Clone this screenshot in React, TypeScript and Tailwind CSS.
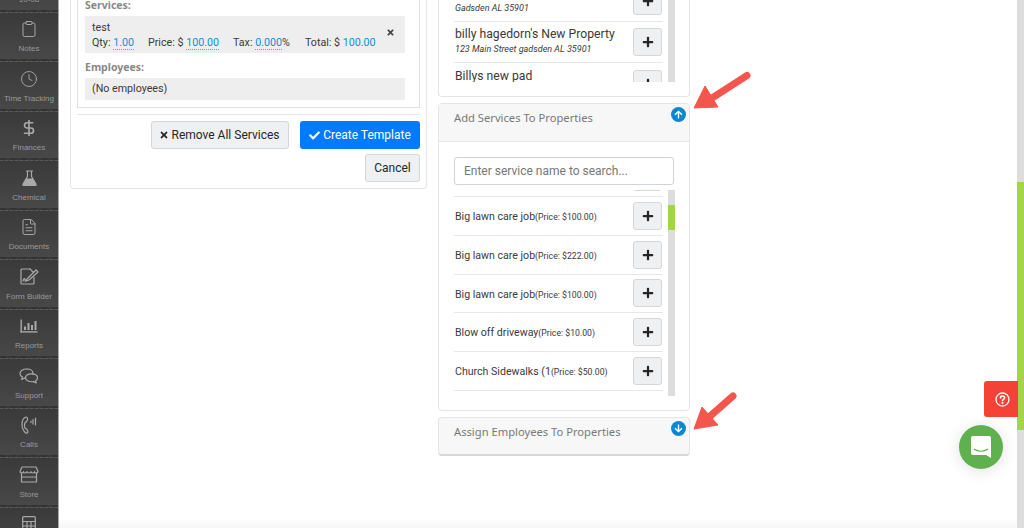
import React from "react";
import { Clipboard, Clock, DollarSign, FileText } from "lucide-react";
import { FaTimes, FaCheck, FaPlus, FaArrowUp, FaArrowDown } from "react-icons/fa";

const C = "#a9a9a9";
const stroke = { fill: "none", stroke: C, strokeWidth: 1.2, strokeLinecap: "round" as const, strokeLinejoin: "round" as const };

function FormIcon() {
  return (
    <svg width="20" height="18" viewBox="0 0 20 18" {...stroke}>
      <path d="M11 1H3a1 1 0 0 0-1 1v13a1 1 0 0 0 1 1h11a1 1 0 0 0 1-1V9" />
      <path d="M11 1l3 3" />
      <path d="M8 11l9-9 2 2-9 8-3 1z" />
      <path d="M4 13c1-3 2-3 2-1s1 1 2 0" />
    </svg>
  );
}
function ReportIcon() {
  return (
    <svg width="18" height="14" viewBox="0 0 18 14" fill={C}>
      <rect x="0.5" y="0.5" width="1.4" height="13" />
      <rect x="0.5" y="12.2" width="17" height="1.4" />
      <rect x="4" y="7.5" width="2" height="3.5" />
      <rect x="7.5" y="4" width="2" height="7" />
      <rect x="11" y="6" width="2" height="5" />
      <rect x="14.5" y="2" width="2" height="9" />
    </svg>
  );
}
function SupportIcon() {
  return (
    <svg width="20" height="16" viewBox="0 0 20 16" {...stroke}>
      <path d="M8 1C4 1 1 3 1 5.500c0 1.600 1 2.800 2.500 3.600L2.500 11.500l3.500-1.600" />
      <path d="M8 1c3.500 0 6 1.800 6 4.200 0 .3 0 .5-.1.800" />
      <path d="M12 5.800c3.800 0 6.500 1.600 6.500 4 0 1.300-.8 2.500-2 3.200l.8 2-3-1.400c-3.800.6-7.800-1-7.800-3.800 0-2.400 2.400-4 5.500-4z" />
    </svg>
  );
}
function CallIcon() {
  return (
    <svg width="16" height="18" viewBox="0 0 16 18" {...stroke}>
      <path d="M5 1C2 2 1 5 1 8.500s1.500 6.500 3.500 8.500c1.200.4 2.300-.3 2.500-1.300L5.500 12.800c-.8 0-1.500-.4-1.700-1.200-.5-1.800-.5-3.400.2-5 .4-.5.900-.7 1.500-.6L6.600 3C6.600 1.800 5.800 1 5 1z" />
      <path d="M10 5v1.500M12 3.500v4.500M14.500 2v7" />
    </svg>
  );
}
function StoreIcon() {
  return (
    <svg width="20" height="17" viewBox="0 0 20 17" {...stroke}>
      <path d="M3 1h14l2 4.500c0 1-1 1.500-1.800 1.500S15.500 6.500 15.500 5.500c0 1-1 1.500-1.800 1.500s-1.700-.5-1.700-1.500c0 1-1 1.500-2 1.500S8 6.500 8 5.500C8 6.500 7 7 6.200 7s-1.700-.5-1.700-1.500C4.500 6.500 3.600 7 2.800 7S1 6.500 1 5.500z" />
      <path d="M2.500 7v9h15V7M2.500 11h15" />
    </svg>
  );
}
function CalcIcon() {
  return (
    <svg width="14" height="16" viewBox="0 0 14 16" {...stroke}>
      <rect x="0.700" y="0.700" width="12.600" height="14.600" rx="1" />
      <path d="M0.700 5.500h12.600M0.700 10h12.600M5 5.500v10M9 5.500v10" />
    </svg>
  );
}
function FlaskIcon() {
  return (
    <svg width="15" height="16" viewBox="0 0 15 16" fill="none" stroke={C} strokeWidth="1.200" strokeLinejoin="round">
      <path d="M4 1h7M5.500 1v5.500L1 14c-.4.8.1 1.500 1 1.500h11c.9 0 1.400-.7 1-1.500L9.500 6.500V1" />
      <path d="M4 8.500h7l3 6.500H1z" fill={C} stroke="none" />
    </svg>
  );
}

const nav: [string, React.ReactNode][] = [
  ["10-08", null],
  ["Notes", <Clipboard size={18} strokeWidth={1.3} color={C} />],
  ["Time Tracking", <Clock size={18} strokeWidth={1.2} color={C} />],
  ["Finances", <DollarSign size={18} strokeWidth={2.2} color={C} />],
  ["Chemical", <FlaskIcon />],
  ["Documents", <FileText size={18} strokeWidth={1.3} color={C} />],
  ["Form Builder", <FormIcon />],
  ["Reports", <ReportIcon />],
  ["Support", <SupportIcon />],
  ["Calls", <CallIcon />],
  ["Store", <StoreIcon />],
  ["Calculator", <CalcIcon />],
];

function PlusButton() {
  return (
    <button className="w-[29px] h-[28px] flex-none flex items-center justify-center rounded-[3px] border border-[#d4d6d8] bg-[#eff0f1] text-[#23272b]">
      <FaPlus size={12} />
    </button>
  );
}

function Editable({ children }: { children: React.ReactNode }) {
  return <span className="text-[#0f8fd6] border-b border-dotted border-[#4aa8e0]">{children}</span>;
}

function ServiceRow({ name, price }: { name: string; price: string }) {
  return (
    <div className="h-[38.8px] flex items-center justify-between border-b border-[#e8e8e8] pl-[1px] pr-[1px]">
      <div className="pt-[2px] text-[10.6px] text-[#3a3a3a] whitespace-nowrap">
        {name}
        <span className="text-[8.7px]">(Price: ${price})</span>
      </div>
      <PlusButton />
    </div>
  );
}

function PropertyRow({ name, address, border = true }: { name: string; address: string; border?: boolean }) {
  return (
    <div className={`h-[41px] flex items-center justify-between pl-[1px] pr-[1px] ${border ? "border-b border-[#e8e8e8]" : ""}`}>
      <div className="whitespace-nowrap">
        <div className="text-[12.2px] leading-[15px]">{name}</div>
        <div className="text-[9px] italic leading-[15px]">{address}</div>
      </div>
      <PlusButton />
    </div>
  );
}

export default function App() {
  return (
    <div className="relative flex h-[528px] w-[1024px] overflow-hidden bg-white text-[#3a3a3a] font-['Roboto','Noto_Sans',sans-serif]">
      <aside className="w-[59px] flex-none h-[528px] overflow-hidden bg-[#3c3c3c] border-r border-[#a8a8a8] font-['Liberation_Sans',sans-serif]">
        <div className="-mt-[38px]">
          {nav.map(([label, icon]) => (
            <div key={label} className="h-[49.5px] flex flex-col items-center justify-end pb-[5px] gap-[3px] border-t border-dashed border-[#5a5a5a] border-b-2 border-b-[#333333] bg-gradient-to-b from-[#3a3a3a] to-[#484848] text-[#9a9a9a]">
              <div className="h-[22px] flex items-center justify-center">{icon}</div>
              <div className="text-[8px] leading-[11px] whitespace-nowrap">{label}</div>
            </div>
          ))}
        </div>
      </aside>

      <main className="flex-1 flex items-start pl-[11px] gap-[11px]">
        <section className="w-[357px] h-[189px] flex-none border border-t-0 border-[#e5e5e5] rounded-b-[4px] px-[6px]">
          <div className="h-[108px] border border-t-0 border-[#e0e0e0] pl-[7px] pr-[14px]">
            <div className="text-[10.5px] font-bold text-[#888] leading-[11px] mb-[5px] font-['Noto_Sans',sans-serif]">Services:</div>
            <div className="relative h-[37px] bg-[#eeeeee] px-[7px] pt-[4px] text-[10.7px] leading-[15px]">
              <div>test</div>
              <div className="whitespace-nowrap flex">
                <span className="w-[56px]">Qty: <Editable>1.00</Editable></span>
                <span className="w-[85px]">Price: $ <Editable>100.00</Editable></span>
                <span className="w-[72px]">Tax: <Editable>0.000</Editable>%</span>
                <span>Total: $ <span className="text-[#0f8fd6]">100.00</span></span>
              </div>
              <FaTimes className="absolute right-[10px] top-[12px] text-[#444]" size={9} />
            </div>
            <div className="text-[10.5px] font-bold text-[#888] leading-[11px] mt-[9px] mb-[5px] font-['Noto_Sans',sans-serif]">Employees:</div>
            <div className="h-[22px] bg-[#eeeeee] px-[7px] pt-[1px] flex items-center text-[10.7px]">(No employees)</div>
          </div>
          <div className="border-t border-[#e5e5e5] mt-[6px] pt-[6px] flex flex-col items-end gap-[5px]">
            <div className="flex gap-[11px]">
              <button className="h-[28px] w-[138px] pr-[2px] flex items-center justify-center gap-[3px] rounded-[3px] border border-[#d4d6d8] bg-[#eff0f1] text-[12px] text-[#23272b]">
                <FaTimes size={10} /> Remove All Services
              </button>
              <button className="h-[28px] w-[120px] flex items-center justify-center gap-[3px] rounded-[3px] bg-[#007bff] text-[12px] text-white">
                <FaCheck size={11} /> Create Template
              </button>
            </div>
            <button className="h-[28px] w-[55px] rounded-[3px] border border-[#d4d6d8] bg-[#eff0f1] text-[12px] text-[#23272b]">Cancel</button>
          </div>
        </section>

        <section className="w-[252px] flex-none">
          <div className="h-[97px] border border-t-0 border-[#e5e5e5] rounded-b-[4px] pl-[15px] pr-[15px]">
            <div className="relative h-[82px] -mr-[1px] overflow-hidden">
              <div className="absolute right-0 top-0 bottom-0 w-[7px] bg-[#dddddd]" />
              <div className="-mt-[19px] pr-[12px]">
                <PropertyRow name={"\u00a0"} address="Gadsden AL 35901" />
                <PropertyRow name="billy hagedorn's New Property" address="123 Main Street gadsden AL 35901" />
                <PropertyRow name="Billys new pad" address="Address" border={false} />
              </div>
            </div>
          </div>

          <div className="mt-[6px] h-[308px] border border-[#e5e5e5] rounded-[4px]">
            <div className="relative h-[38px] bg-[#f7f7f7] border-b border-[#e5e5e5] pl-[15px] pt-[6px] text-[11.2px] text-[#777] leading-[16px] font-['Noto_Sans',sans-serif]">
              Add Services To Properties
              <span className="absolute right-[3px] top-[3px] w-[15px] h-[15px] rounded-full bg-[#0b87d1] flex items-center justify-center text-white">
                <FaArrowUp size={9} />
              </span>
            </div>
            <div className="px-[15px] pt-[15px]">
              <div className="h-[28px] border border-[#ced4da] rounded-[3px] px-[9px] flex items-center text-[12px] text-[#777]">Enter service name to search...</div>
              <div className="relative mt-[5px] h-[206px] -mr-[1px] overflow-hidden">
                <div className="absolute right-0 top-0 bottom-0 w-[7px] bg-[#dddddd]">
                  <div className="mt-[15px] h-[25px] bg-[#a3d54c]" />
                </div>
                <div className="-mt-[31.8px] pr-[12px]">
                  <ServiceRow name="Big lawn care job" price="100.00" />
                  <ServiceRow name="Big lawn care job" price="100.00" />
                  <ServiceRow name="Big lawn care job" price="222.00" />
                  <ServiceRow name="Big lawn care job" price="100.00" />
                  <ServiceRow name="Blow off driveway" price="10.00" />
                  <ServiceRow name="Church Sidewalks (1" price="50.00" />
                </div>
              </div>
            </div>
          </div>

          <div className="relative mt-[6px] h-[39px] border border-[#e5e5e5] border-b-2 border-b-[#d8d8d8] rounded-[4px] bg-[#f7f7f7] pl-[15px] pt-[6px] text-[11.2px] text-[#777] leading-[16px] font-['Noto_Sans',sans-serif]">
            Assign Employees To Properties
            <span className="absolute right-[3px] top-[3px] w-[15px] h-[15px] rounded-full bg-[#0b87d1] flex items-center justify-center text-white">
              <FaArrowDown size={9} />
            </span>
          </div>
        </section>
      </main>

      <svg className="absolute left-[690px] top-[68px]" width="64" height="44" viewBox="0 0 64 44" fill="#f4564e">
        <path d="M4 40 15 18 28 39z" stroke="#f4564e" strokeLinejoin="round" />
        <path d="M19 32 57 7.500" stroke="#f4564e" strokeWidth="7" strokeLinecap="round" />
      </svg>
      <svg className="absolute left-[690px] top-[388px]" width="50" height="44" viewBox="0 0 50 44" fill="#f4564e">
        <path d="M4 41 12 19 28 37z" stroke="#f4564e" strokeLinejoin="round" />
        <path d="M18 30 43 8" stroke="#f4564e" strokeWidth="7" strokeLinecap="round" />
      </svg>

      <div className="absolute right-0 top-0 bottom-0 w-[7px] bg-[#dddddd]">
        <div className="mt-[182px] h-[248px] bg-[#a3d54c]" />
      </div>
      <div className="absolute left-[984px] top-[381px] w-[34px] h-[36px] pl-[2px] bg-[#f44336] rounded-l-[3px] flex items-center justify-center">
        <svg width="15" height="15" viewBox="0 0 15 15" fill="none" stroke="#fff" strokeWidth="1.3" strokeLinecap="round">
          <circle cx="7.5" cy="7.5" r="6.5" />
          <path d="M5.500 6c0-2.600 4-2.600 4-.2 0 1.500-2 1.500-2 3" strokeWidth="1.6" />
          <circle cx="7.5" cy="11" r="0.4" />
        </svg>
      </div>
      <div className="absolute left-[959px] top-[425px] w-[44px] h-[44px] rounded-full bg-[#5eb14e] shadow-[0_2px_16px_rgba(0,0,0,0.12)] flex items-center justify-center">
        <svg width="22" height="24" viewBox="0 0 22 24">
          <path d="M3 1h16a2 2 0 0 1 2 2v20l-5-3H3a2 2 0 0 1-2-2V3a2 2 0 0 1 2-2z" fill="#fff" />
          <path d="M4 14c4 3 10 3 14 0" fill="none" stroke="#5eb14e" strokeWidth="1.2" />
        </svg>
      </div>
      <div className="absolute left-[59px] right-[7px] bottom-0 h-[10px] bg-gradient-to-b from-white to-[#f6f6f6]" />
    </div>
  );
}
